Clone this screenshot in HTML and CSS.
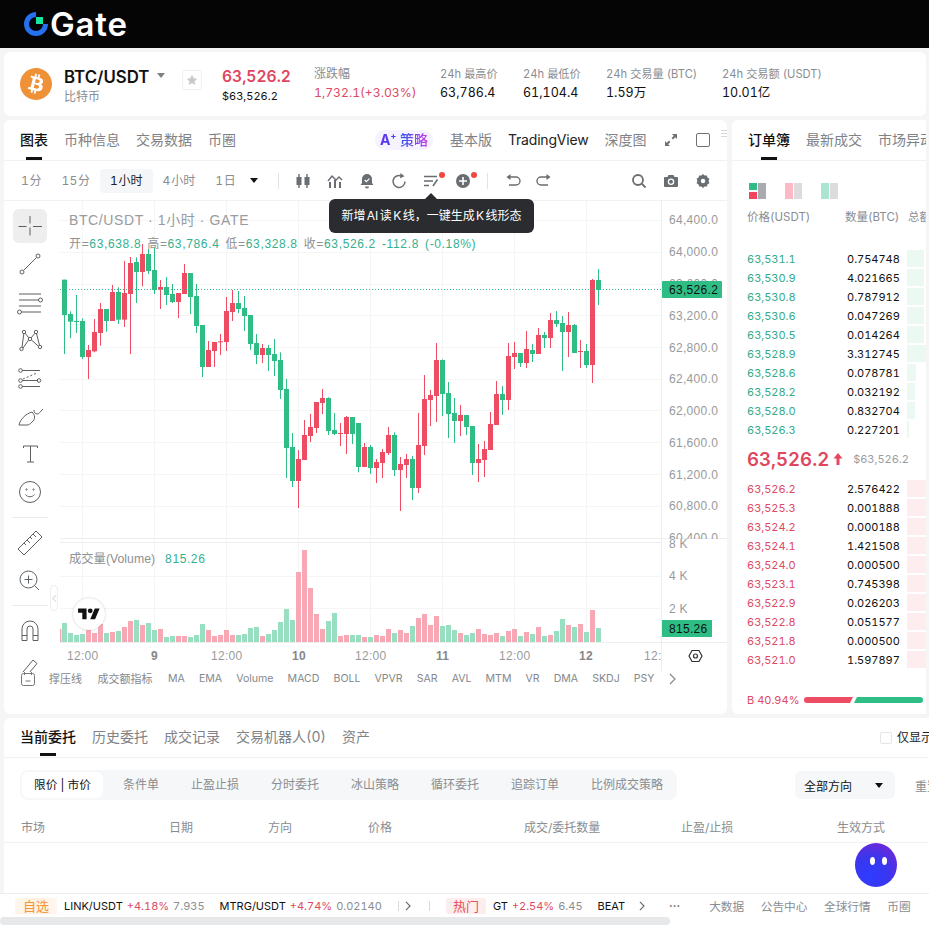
FILE: index.html
```html
<!DOCTYPE html>
<html lang="zh-CN">
<head>
    <meta charset="UTF-8">
    <meta name="viewport" content="width=device-width, initial-scale=1.0">
    <title>BTC/USDT | Gate</title>
    <link rel="stylesheet" href="styles.css">
</head>
<body>
    <header class="topbar">
        <svg class="logo-mark" viewBox="0 0 24 24" width="24" height="24">
            <path fill="#2570ee" d="M12 0A12 12 0 1 0 24 12H19A7 7 0 1 1 12 5Z"/>
            <rect fill="#17e6a1" x="12" y="5" width="7" height="7"/>
        </svg>
        <span class="logo-text">Gate</span>
    </header>

    <section class="ticker">
        <svg class="coin" viewBox="0 0 24 24" width="32" height="32">
            <circle cx="12" cy="12" r="10" fill="#fff"/>
            <path fill="#ef9136" d="M23.638 14.904c-1.602 6.43-8.113 10.34-14.542 8.736C2.67 22.05-1.244 15.525.362 9.105 1.962 2.67 8.475-1.243 14.9.358c6.43 1.605 10.342 8.115 8.738 14.548v-.002zm-6.35-4.613c.24-1.59-.974-2.45-2.64-3.03l.54-2.153-1.315-.33-.525 2.107c-.345-.087-.705-.167-1.064-.25l.526-2.127-1.32-.33-.54 2.165c-.285-.067-.565-.132-.84-.2l-1.815-.45-.35 1.407s.975.225.955.236c.535.136.63.486.615.766l-1.477 5.92c-.075.166-.24.406-.614.314.015.02-.96-.24-.96-.24l-.66 1.51 1.71.426.93.242-.54 2.19 1.32.327.54-2.17c.36.1.705.19 1.05.273l-.51 2.154 1.32.33.545-2.19c2.24.427 3.93.257 4.64-1.774.57-1.637-.03-2.58-1.217-3.196.854-.193 1.5-.76 1.68-1.93h.01zm-3.01 4.22c-.404 1.64-3.157.75-4.05.53l.72-2.9c.896.23 3.757.67 3.33 2.37zm.41-4.24c-.37 1.49-2.662.735-3.405.55l.654-2.64c.744.18 3.137.524 2.75 2.084v.006z"/>
        </svg>
        <div class="pair">
            <div class="pair-name">BTC/USDT<i class="caret caret-gray"></i></div>
            <div class="pair-sub">比特币</div>
        </div>
        <div class="star-box">
            <svg viewBox="0 0 12 12" width="12" height="12"><path fill="#c8cacc" d="M6 .8l1.6 3.4 3.7.5-2.7 2.5.7 3.7L6 9.1l-3.3 1.8.7-3.7L.7 4.7l3.7-.5z"/></svg>
        </div>
        <div class="last">
            <div class="last-price">63,526.2</div>
            <div class="last-usd">$63,526.2</div>
        </div>
        <div class="stat stat-change">
            <div class="stat-label stat-label-cn">涨跌幅</div>
            <div class="stat-value up">1,732.1(+3.03%)</div>
        </div>
        <div class="stat stat-high">
            <div class="stat-label">24h 最高价</div>
            <div class="stat-value">63,786.4</div>
        </div>
        <div class="stat stat-low">
            <div class="stat-label">24h 最低价</div>
            <div class="stat-value">61,104.4</div>
        </div>
        <div class="stat stat-vol">
            <div class="stat-label">24h 交易量 (BTC)</div>
            <div class="stat-value">1.59万</div>
        </div>
        <div class="stat">
            <div class="stat-label">24h 交易额 (USDT)</div>
            <div class="stat-value">10.01亿</div>
        </div>
    </section>

    <div class="trade-row">
        <section class="chart-card">
            <div class="tabs">
                <span class="tab active">图表</span>
                <span class="tab">币种信息</span>
                <span class="tab">交易数据</span>
                <span class="tab">币圈</span>
                <span class="ai-pill"><span class="ai-text"><b>A<sup>+</sup></b> 策略</span></span>
                <span class="tab tab-basic">基本版</span>
                <span class="tab tab-dark">TradingView</span>
                <span class="tab">深度图</span>
                <svg class="tab-icon tab-expand" viewBox="0 0 14 14" width="14" height="14"><path fill="#6f7276" d="M8 1h5v5l-1.8-1.8-2.2 2.2-1.4-1.4 2.2-2.2zM6 13H1V8l1.8 1.8L5 7.6 6.4 9l-2.2 2.2z"/></svg>
                <span class="tab-square"></span>
                <span class="tab-grip"></span>
            </div>

            <div class="toolbar">
                <span class="interval">1 分</span>
                <span class="interval">15 分</span>
                <span class="interval active">1 小时</span>
                <span class="interval">4 小时</span>
                <span class="interval">1 日</span>
                <i class="caret caret-dark"></i>
                <span class="tool-sep"></span>
                <svg class="tool" viewBox="0 0 16 16"><path fill="#6a6d71" d="M3.3 1h1.4v3H6.5v8H4.7v3H3.3v-3H1.5V4h1.8zM11.3 1h1.4v3h1.8v8h-1.8v3h-1.4v-3H9.5V4h1.8z"/></svg>
                <svg class="tool" viewBox="0 0 16 16"><path fill="#6a6d71" d="M2 9h2v6H2zM7 7h2v8H7zM12 9h2v6h-2z"/><path fill="none" stroke="#6a6d71" stroke-width="1.4" d="M1 8l4-5 4 4 3-3 3 3"/></svg>
                <svg class="tool" viewBox="0 0 16 16"><path fill="#6a6d71" d="M8 1a5 5 0 0 1 5 5v4l1.5 2h-13L3 10V6a5 5 0 0 1 5-5zM6 13.5h4a2 2 0 0 1-4 0z"/><path fill="none" stroke="#fff" stroke-width="1.2" d="M5.7 7l1.7 1.7 3-3"/></svg>
                <svg class="tool" viewBox="0 0 16 16"><path fill="none" stroke="#6a6d71" stroke-width="1.5" d="M14 8.5A6 6 0 1 1 10.5 3"/><path fill="#6a6d71" d="M9.5 0l4 3.2-4.5 2z"/></svg>
                <span class="tool-dotted">
                    <svg class="tool" viewBox="0 0 16 16"><path fill="none" stroke="#6a6d71" stroke-width="1.4" d="M1 3.5h13M1 8h9M1 12.5h5"/><path fill="none" stroke="#6a6d71" stroke-width="1.6" d="M14.5 6.5L10 13"/></svg>
                </span>
                <span class="tool-dotted">
                    <svg class="tool" viewBox="0 0 16 16"><circle cx="8" cy="8" r="7" fill="#6a6d71"/><path stroke="#fff" stroke-width="1.6" d="M8 4v8M4 8h8"/></svg>
                </span>
                <span class="tool-sep tool-sep-b"></span>
                <svg class="tool tool-undo" viewBox="0 0 16 16"><path fill="none" stroke="#6a6d71" stroke-width="1.4" d="M3 4h8a3.5 3.5 0 0 1 0 8H4"/><path fill="#6a6d71" d="M5.5 1v6L1.5 4z"/></svg>
                <svg class="tool" viewBox="0 0 16 16"><path fill="none" stroke="#6a6d71" stroke-width="1.4" d="M13 4H5a3.5 3.5 0 0 0 0 8h7"/><path fill="#6a6d71" d="M10.5 1v6l4-3z"/></svg>
                <svg class="tool tool-search" viewBox="0 0 16 16"><circle cx="7" cy="7" r="5" fill="none" stroke="#6a6d71" stroke-width="1.8"/><path stroke="#6a6d71" stroke-width="1.8" d="M10.7 10.7L14.5 14.5"/></svg>
                <svg class="tool" viewBox="0 0 16 16"><path fill="#6a6d71" d="M5.5 2h5l1 2H14a1 1 0 0 1 1 1v8a1 1 0 0 1-1 1H2a1 1 0 0 1-1-1V5a1 1 0 0 1 1-1h2.5z"/><circle cx="8" cy="8.8" r="2.6" fill="none" stroke="#fff" stroke-width="1.3"/></svg>
                <svg class="tool" viewBox="0 0 16 16"><path fill="#6a6d71" d="M8 1l1.600 1.600 2.300-.2.500 2.200 2 1.200-.8 2.200.8 2.200-2 1.200-.5 2.200-2.300-.2L8 15l-1.600-1.600-2.300.2-.5-2.200-2-1.200.8-2.200-.8-2.200 2-1.200.5-2.200 2.300.2z"/><circle cx="8" cy="8" r="2.200" fill="#fff"/></svg>
                <div class="hint">新增 AI 读 K 线，一键生成 K 线形态</div>
            </div>

            <div class="chart-body">
                <nav class="rail">
                    <button class="rail-btn active">
                        <svg viewBox="0 0 28 28" class="rail-icon"><path d="M14 4v7.5M14 15.500v8M2.500 14.500h8M17 14.500h9"/></svg>
                    </button>
                    <button class="rail-btn">
                        <svg viewBox="0 0 28 28" class="rail-icon"><circle cx="6" cy="22" r="2"/><circle cx="22" cy="6" r="2"/><path d="M7.500 20.500L20.500 7.500"/></svg>
                    </button>
                    <button class="rail-btn">
                        <svg viewBox="0 0 28 28" class="rail-icon"><path d="M3 6h22M3 12h20M3 18h22M5.500 24H25"/><circle cx="24.500" cy="12" r="2"/><circle cx="3.500" cy="24" r="2"/></svg>
                    </button>
                    <button class="rail-btn">
                        <svg viewBox="0 0 28 28" class="rail-icon"><circle cx="5.500" cy="23" r="1.700"/><circle cx="8" cy="6" r="1.700"/><circle cx="14" cy="13" r="1.700"/><circle cx="20" cy="6" r="1.700"/><circle cx="24" cy="21" r="1.700"/><path d="M6 21.500L7.800 7.700M9.200 7.300L12.800 11.800M15.200 11.800L18.800 7.300M20.500 7.700L23.500 19.300M7 22L12.500 14.200M15.500 14L22.500 20.300"/></svg>
                    </button>
                    <button class="rail-btn">
                        <svg viewBox="0 0 28 28" class="rail-icon"><path d="M6 6.500h18M6 16.500h16M6 22.500h18"/><path stroke-dasharray="2 2" d="M7 15L21 9"/><circle cx="4.500" cy="6.500" r="1.800"/><circle cx="4.500" cy="16.500" r="1.800"/><circle cx="23" cy="16.500" r="1.800"/><circle cx="4.500" cy="22.500" r="1.800"/></svg>
                    </button>
                    <button class="rail-btn">
                        <svg viewBox="0 0 28 28" class="rail-icon"><path d="M3 23C4 18 9 12 16 10C19 13 20 17 16 20C14 22 13 23 11 23H3Z"/><path d="M18 8c0 2 1 4 3 4s3-2 6-5"/></svg>
                    </button>
                    <button class="rail-btn">
                        <svg viewBox="0 0 28 28" class="rail-icon"><path d="M7.500 8V6h14v2M14.500 6v16M11 22h7"/></svg>
                    </button>
                    <button class="rail-btn">
                        <svg viewBox="0 0 28 28" class="rail-icon"><circle cx="14" cy="14" r="10.500"/><circle cx="10.500" cy="11.500" r=".6"/><circle cx="17.500" cy="11.500" r=".6"/><path d="M9.500 16.500c2 3 7 3 9 0"/></svg>
                    </button>
                    <div class="rail-sep"></div>
                    <button class="rail-btn">
                        <svg viewBox="0 0 28 28" class="rail-icon"><path d="M2 20L20 2l6 6L8 26zM8 14l2 2M11 11l3 3M14 8l2 2M17 5l3 3"/></svg>
                    </button>
                    <button class="rail-btn">
                        <svg viewBox="0 0 28 28" class="rail-icon"><circle cx="12.500" cy="12.500" r="8.500"/><path d="M12.500 8.500v8M8.500 12.500h8M18.500 18.500L23 23"/></svg>
                    </button>
                    <div class="rail-sep rail-sep-b"></div>
                    <button class="rail-btn">
                        <svg viewBox="0 0 28 28" class="rail-icon"><path d="M6 23.500V12a8 8 0 0 1 16 0v11.500h-5V12a3 3 0 0 0-6 0v11.500zM6 18.500h5M17 18.500h5"/></svg>
                    </button>
                    <button class="rail-btn rail-btn-last">
                        <svg viewBox="0 0 28 28" class="rail-icon"><path d="M7 17L17 5l4 3.500-10 12-5 1.500z"/></svg>
                    </button>
                </nav>

                <div class="plot">
                    <svg id="chart" class="plot-svg" viewBox="60 202 667 470" width="667" height="470"></svg>
                    <div class="legend">
                        <div class="legend-title">BTC/USDT · 1小时 · GATE</div>
                        <div class="legend-ohlc">
                            <span><em>开=</em>63,638.8</span>
                            <span><em>高=</em>63,786.4</span>
                            <span><em>低=</em>63,328.8</span>
                            <span><em>收=</em>63,526.2</span>
                            <span>-112.8</span>
                            <span>(-0.18%)</span>
                        </div>
                    </div>
                    <div class="legend-vol"><em>成交量(Volume)</em><span>815.26</span></div>
                    <div class="tv-badge">
                        <svg viewBox="0 0 36 28" width="22" height="17"><path fill="#111" d="M14 22H7V11H0V4h14v18zM28 22h-8l7.500-18h8L28 22z"/><circle fill="#111" cx="20" cy="8" r="4"/></svg>
                    </div>
                    <div class="rail-toggle">
                        <svg viewBox="0 0 6 10" width="5" height="9"><path fill="none" stroke="#bbb" d="M5 1L1 5l4 4"/></svg>
                    </div>
                </div>
            </div>

            <div class="indicators">
                <svg class="ind-icon" viewBox="0 0 14 14" width="14" height="14"><rect x=".5" y="1.500" width="13" height="12" rx="2" fill="none" stroke="#777"/><path stroke="#777" d="M3.500 0v3M10.500 0v3M4.500 9h5"/></svg>
                <span class="ind-cn">撑压线</span>
                <span class="ind-cn">成交额指标</span>
                <span>MA</span>
                <span>EMA</span>
                <span>Volume</span>
                <span>MACD</span>
                <span>BOLL</span>
                <span>VPVR</span>
                <span>SAR</span>
                <span>AVL</span>
                <span>MTM</span>
                <span>VR</span>
                <span>DMA</span>
                <span>SKDJ</span>
                <span>PSY</span>
                <svg class="ind-next" viewBox="0 0 7 12" width="7" height="12"><path fill="none" stroke="#888" stroke-width="1.200" d="M1 1l5 5-5 5"/></svg>
            </div>
        </section>

        <section class="book-card">
            <div class="tabs book-tabs">
                <span class="tab active">订单簿</span>
                <span class="tab">最新成交</span>
                <span class="tab">市场异动</span>
            </div>
            <div class="book-modes">
                <span class="mode"><i class="mode-split"><b></b><b></b></i><i class="mode-side"></i></span>
                <span class="mode"><i class="mode-bid"></i><i class="mode-light"></i></span>
                <span class="mode"><i class="mode-ask"></i><i class="mode-light"></i></span>
            </div>
            <div class="book-head">
                <span class="col-price">价格(USDT)</span>
                <span class="col-amount">数量(BTC)</span>
                <span class="col-total">总额</span>
            </div>
            <div class="book-side asks">
                <div class="row"><span class="col-price">63,531.1</span><span class="col-amount">0.754748</span><span class="depth"><i style="width:17px"></i></span></div>
                <div class="row"><span class="col-price">63,530.9</span><span class="col-amount">4.021665</span><span class="depth"><i style="width:17px"></i></span></div>
                <div class="row"><span class="col-price">63,530.8</span><span class="col-amount">0.787912</span><span class="depth"><i style="width:17px"></i></span></div>
                <div class="row"><span class="col-price">63,530.6</span><span class="col-amount">0.047269</span><span class="depth"><i style="width:17px"></i></span></div>
                <div class="row"><span class="col-price">63,530.5</span><span class="col-amount">0.014264</span><span class="depth"><i style="width:17px"></i></span></div>
                <div class="row"><span class="col-price">63,528.9</span><span class="col-amount">3.312745</span><span class="depth"><i style="width:19px"></i></span></div>
                <div class="row"><span class="col-price">63,528.6</span><span class="col-amount">0.078781</span><span class="depth"><i style="width:9px"></i></span></div>
                <div class="row"><span class="col-price">63,528.2</span><span class="col-amount">0.032192</span><span class="depth"><i style="width:8px"></i></span></div>
                <div class="row"><span class="col-price">63,528.0</span><span class="col-amount">0.832704</span><span class="depth"><i style="width:8px"></i></span></div>
                <div class="row"><span class="col-price">63,526.3</span><span class="col-amount">0.227201</span><span class="depth"><i style="width:2px"></i></span></div>
            </div>
            <div class="book-mid">
                <span class="mid-price">63,526.2</span>
                <svg viewBox="0 0 10 12" width="10" height="12"><path fill="#e8455e" d="M5 0l4.500 5.500H6.500V12h-3V5.500H.5z"/></svg>
                <span class="mid-usd">$63,526.2</span>
            </div>
            <div class="book-side bids">
                <div class="row"><span class="col-price">63,526.2</span><span class="col-amount">2.576422</span><span class="depth"><i style="width:19px"></i></span></div>
                <div class="row"><span class="col-price">63,525.3</span><span class="col-amount">0.001888</span><span class="depth"><i style="width:19px"></i></span></div>
                <div class="row"><span class="col-price">63,524.2</span><span class="col-amount">0.000188</span><span class="depth"><i style="width:19px"></i></span></div>
                <div class="row"><span class="col-price">63,524.1</span><span class="col-amount">1.421508</span><span class="depth"><i style="width:19px"></i></span></div>
                <div class="row"><span class="col-price">63,524.0</span><span class="col-amount">0.000500</span><span class="depth"><i style="width:19px"></i></span></div>
                <div class="row"><span class="col-price">63,523.1</span><span class="col-amount">0.745398</span><span class="depth"><i style="width:19px"></i></span></div>
                <div class="row"><span class="col-price">63,522.9</span><span class="col-amount">0.026203</span><span class="depth"><i style="width:19px"></i></span></div>
                <div class="row"><span class="col-price">63,522.8</span><span class="col-amount">0.051577</span><span class="depth"><i style="width:19px"></i></span></div>
                <div class="row"><span class="col-price">63,521.8</span><span class="col-amount">0.000500</span><span class="depth"><i style="width:19px"></i></span></div>
                <div class="row"><span class="col-price">63,521.0</span><span class="col-amount">1.597897</span><span class="depth"><i style="width:19px"></i></span></div>
            </div>
            <div class="ratio">
                <span class="ratio-label">B 40.94%</span>
                <i class="ratio-buy"></i>
                <i class="ratio-sell"></i>
            </div>
        </section>
    </div>

    <section class="orders-card">
        <div class="tabs orders-tabs">
            <span class="tab active">当前委托</span>
            <span class="tab">历史委托</span>
            <span class="tab">成交记录</span>
            <span class="tab">交易机器人(0)</span>
            <span class="tab">资产</span>
            <label class="only-current"><i class="checkbox"></i>仅显示当前</label>
        </div>
        <div class="order-filter">
            <div class="segments">
                <span class="segment active">限价 | 市价</span>
                <span class="segment">条件单</span>
                <span class="segment">止盈止损</span>
                <span class="segment">分时委托</span>
                <span class="segment">冰山策略</span>
                <span class="segment">循环委托</span>
                <span class="segment">追踪订单</span>
                <span class="segment">比例成交策略</span>
            </div>
            <span class="filter-sep"></span>
            <div class="select">全部方向<i class="caret caret-dark"></i></div>
            <span class="reset">重置</span>
        </div>
        <div class="order-head">
            <span class="h-market">市场</span>
            <span class="h-date">日期</span>
            <span class="h-side">方向</span>
            <span class="h-price">价格</span>
            <span class="h-qty">成交/委托数量</span>
            <span class="h-tpsl">止盈/止损</span>
            <span class="h-tif">生效方式</span>
        </div>
        <div class="chat-bot"><i></i><i></i></div>
    </section>

    <footer class="statusbar">
        <span class="chip chip-fav">自选</span>
        <span class="tick"><b>LINK/USDT</b><em>+4.18%</em><span>7.935</span></span>
        <span class="tick"><b>MTRG/USDT</b><em>+4.74%</em><span>0.02140</span></span>
        <span class="bar-sep bar-sep-a"></span>
        <svg class="bar-arrow" viewBox="0 0 7 12" width="6" height="10"><path fill="none" stroke="#666" stroke-width="1.300" d="M1 1l5 5-5 5"/></svg>
        <span class="bar-sep bar-sep-b"></span>
        <span class="chip chip-hot">热门</span>
        <span class="tick tick-gt"><b>GT</b><em>+2.54%</em><span>6.45</span></span>
        <span class="tick tick-beat"><b>BEAT</b></span>
        <svg class="bar-arrow bar-arrow-b" viewBox="0 0 7 12" width="6" height="10"><path fill="none" stroke="#666" stroke-width="1.300" d="M1 1l5 5-5 5"/></svg>
        <span class="bar-more">···</span>
        <span class="bar-link bar-link-first">大数据</span>
        <span class="bar-link">公告中心</span>
        <span class="bar-link">全球行情</span>
        <span class="bar-link">币圈</span>
    </footer>
    <div class="scrollbar"><i></i></div>

    <script src="chart.js"></script>
</body>
</html>
```

FILE: styles.css
```css
* {
    box-sizing: border-box;
}

html, body {
    margin: 0;
    height: 925px;
    overflow: hidden;
}

body {
    width: 929px;
    position: relative;
    background: #f5f5f5;
    color: #111;
    font-family: Inter, "Noto Sans CJK SC", sans-serif;
    font-size: 12px;
    font-variant-numeric: tabular-nums;
}

em, i {
    font-style: normal;
}

.topbar {
    height: 48px;
    background: #050505;
    display: flex;
    align-items: center;
    padding-left: 24px;
}

.logo-text {
    margin-left: 2px;
    color: #fff;
    font-size: 33px;
    font-weight: 600;
    line-height: 48px;
    letter-spacing: 0.8px;
}

/* ticker */
.ticker {
    margin: 4px 3px 0 4px;
    height: 64px;
    background: #fff;
    border-radius: 6px;
    display: flex;
    align-items: center;
    padding-left: 16px;
}

.coin {
    margin-right: 12px;
    flex: none;
}

.pair {
    width: 102px;
    margin-top: 4px;
}

.pair-name {
    font-size: 16.800px;
    font-weight: 600;
    line-height: 20px;
    display: flex;
    align-items: center;
}

.pair-sub {
    color: #8a8d91;
    line-height: 18px;
    margin-top: 1px;
}

.caret {
    display: inline-block;
    width: 0;
    height: 0;
    border-left: 4px solid transparent;
    border-right: 4px solid transparent;
    border-top: 5px solid #111;
}

.caret-gray {
    border-top-color: #7d8084;
    margin-left: 8px;
    margin-top: -3px;
}

.star-box {
    margin-left: 16px;
    width: 20px;
    height: 20px;
    border: 1px solid #f0f0f0;
    border-radius: 3px;
    display: flex;
    align-items: center;
    justify-content: center;
    margin-top: -8px;
}

.last {
    margin-left: 20px;
    width: 92px;
    margin-top: 2px;
}

.last-price {
    color: #e0475f;
    font-size: 15.600px;
    font-weight: 600;
    line-height: 22px;
}

.last-usd {
    line-height: 16px;
    font-size: 11px;
}

.stat {
    margin-top: -1px;
}

.stat-label {
    color: #8a8d91;
    font-size: 11.200px;
    line-height: 16px;
    white-space: nowrap;
}

.stat-label-cn {
    font-size: 12px;
}

.stat-value {
    font-size: 12.500px;
    line-height: 18px;
    margin-top: 2px;
}

.stat-value.up {
    color: #dd4a63;
    font-size: 12.200px;
}

.stat-change { width: 126px; }
.stat-high { width: 83px; }
.stat-low { width: 83px; }
.stat-vol { width: 116px; }

/* shared tabs */
.tabs {
    height: 41px;
    border-bottom: 1px solid #f0f1f2;
    display: flex;
    align-items: center;
    padding-left: 16px;
    gap: 16px;
    font-size: 14px;
    position: relative;
}

.tab {
    color: #7f8286;
    line-height: 20px;
    white-space: nowrap;
}

.tab.active {
    color: #111;
    font-weight: 500;
    position: relative;
}

.tab.active::after {
    content: "";
    position: absolute;
    left: 50%;
    bottom: -10px;
    width: 16px;
    height: 3px;
    margin-left: -8px;
    background: #111;
}

.tab-dark {
    color: #222;
    letter-spacing: -0.2px;
}

.ai-pill {
    margin-left: 123px;
    margin-right: 1px;
    height: 20px;
    width: 58px;
    border-radius: 10px;
    background: #f6f2ff;
    text-align: center;
    line-height: 20px;
    font-weight: 500;
    white-space: nowrap;
}

.ai-text {
    background-image: linear-gradient(90deg, #6a2cf0, #2f55ee 45%, #c83ce6);
    -webkit-background-clip: text;
    background-clip: text;
    color: transparent;
}

.ai-pill b {
    font-weight: 700;
}

.ai-pill sup {
    font-size: 9px;
    line-height: 0;
}

.tab-expand {
    margin-left: 2px;
    flex: none;
}

.tab-square {
    width: 14px;
    height: 14px;
    border: 1.500px solid #6f7276;
    border-radius: 2px;
    margin-left: 2px;
}

.tab-grip {
    position: absolute;
    right: 0;
    top: 10px;
    width: 6px;
    height: 9px;
    background: repeating-linear-gradient(#d8d8d8 0 1px, #fff 1px 3px);
}

/* trade row */
.trade-row {
    display: flex;
    margin: 4px 3px 0 4px;
    gap: 5px;
    height: 594px;
}

.chart-card {
    width: 723px;
    background: #fff;
    border-radius: 6px;
    display: flex;
    flex-direction: column;
}

.toolbar {
    height: 40px;
    border-bottom: 1px solid #f0f1f2;
    display: flex;
    align-items: center;
    padding-left: 7px;
    position: relative;
    flex: none;
}

.interval {
    color: #8a8d91;
    line-height: 24px;
    padding: 0 10px;
    border-radius: 4px;
    white-space: nowrap;
    word-spacing: -2.400px;
}

.interval.active {
    color: #222;
    background: #f5f6f7;
}

.toolbar .caret-dark {
    margin-left: 4px;
    flex: none;
}

.tool-sep {
    width: 1px;
    height: 16px;
    background: #e2e3e5;
    margin: 0 16px 0 20px;
    flex: none;
}

.tool-sep-b {
    margin: 0 17px 0 0;
}

.tool {
    width: 16px;
    height: 16px;
    margin-right: 16px;
    flex: none;
}

.tool-undo {
    margin-right: 15px;
}

.tool-search {
    margin-left: 63px;
}

.tool-dotted {
    position: relative;
    display: flex;
}

.tool-dotted::after {
    content: "";
    position: absolute;
    right: 10px;
    top: -1px;
    width: 6px;
    height: 6px;
    border-radius: 50%;
    background: #f0483e;
}

.hint {
    position: absolute;
    left: 325px;
    top: 38px;
    width: 205px;
    height: 34px;
    line-height: 34px;
    text-align: center;
    background: #2a2c30;
    color: #fff;
    border-radius: 6px;
    z-index: 5;
    white-space: nowrap;
    word-spacing: -1.800px;
}

.hint::before {
    content: "";
    position: absolute;
    left: 96px;
    top: -6px;
    border-left: 6px solid transparent;
    border-right: 6px solid transparent;
    border-bottom: 6px solid #2a2c30;
}

.chart-body {
    height: 471px;
    display: flex;
    flex: none;
}

.rail {
    width: 56px;
    padding: 6px 4px 0 0;
    height: 471px;
    overflow: hidden;
    flex: none;
    border-right: 0;
}

.rail-btn {
    display: flex;
    align-items: center;
    justify-content: center;
    width: 52px;
    height: 38px;
    padding: 0;
    border: 0;
    background: none;
    position: relative;
}

.rail-btn.active::before {
    content: "";
    position: absolute;
    left: 9px;
    top: 2px;
    width: 34px;
    height: 34px;
    border-radius: 6px;
    background: #eeeeee;
}

.rail-icon {
    width: 28px;
    height: 28px;
    fill: none;
    stroke: #5c5f63;
    stroke-width: 1;
    position: relative;
}

.rail-sep {
    height: 1px;
    width: 36px;
    margin: 6px 0 6px 8px;
    background: #e8e9ea;
}

.rail-sep-b {
    margin-top: 5px;
}

.plot {
    position: relative;
    width: 667px;
    height: 471px;
}

.plot-svg {
    display: block;
}

.plot-svg text {
    font-family: "Liberation Sans", sans-serif;
    font-size: 12px;
    fill: #98999c;
    letter-spacing: 0.3px;
}

.plot-svg .tick-day {
    font-weight: 700;
    fill: #85878a;
}

.plot-svg .tag-text {
    fill: #111;
}

.legend {
    position: absolute;
    left: 9px;
    top: 10px;
    color: #34b08e;
    font-family: "Liberation Sans", "Noto Sans CJK SC", sans-serif;
}

.legend em {
    color: #8f9194;
}

.legend-title {
    color: #999b9e;
    font-size: 14px;
    line-height: 18px;
    letter-spacing: 0.6px;
}

.legend-ohlc {
    margin-top: 6px;
    line-height: 18px;
    letter-spacing: 0.65px;
    display: flex;
    gap: 6px;
    white-space: nowrap;
}

.legend-vol {
    position: absolute;
    left: 9px;
    top: 349px;
    line-height: 18px;
    font-family: "Liberation Sans", "Noto Sans CJK SC", sans-serif;
    color: #34b08e;
    letter-spacing: 0.6px;
    white-space: nowrap;
}

.legend-vol em {
    color: #8f9194;
    margin-right: 10px;
    letter-spacing: 0;
    font-size: 12.300px;
}

.tv-badge {
    position: absolute;
    left: 13px;
    top: 397px;
    width: 32px;
    height: 32px;
    border-radius: 50%;
    background: #fff;
    box-shadow: 0 0 2px rgba(0, 0, 0, 0.25);
    display: flex;
    align-items: center;
    justify-content: center;
}

.rail-toggle {
    position: absolute;
    left: -10px;
    top: 384px;
    width: 8px;
    height: 26px;
    background: #fff;
    border: 1px solid #efefef;
    border-radius: 4px;
    display: flex;
    align-items: center;
    justify-content: center;
}

.indicators {
    display: flex;
    gap: 14px;
    padding-left: 17px;
    font-size: 10.600px;
    line-height: 14px;
    color: #85888c;
    height: 42px;
    white-space: nowrap;
}

.ind-cn {
    font-size: 11px;
    margin-right: 1.500px;
}

.ind-icon, .ind-next {
    flex: none;
}

.ind-next {
    margin-top: 1px;
}

/* order book */
.book-card {
    width: 194px;
    background: #fff;
    border-radius: 6px 0 0 6px;
    overflow: hidden;
}

.book-modes {
    display: flex;
    gap: 19px;
    padding: 22px 0 0 17px;
    height: 38px;
}

.mode {
    display: flex;
    gap: 1px;
    height: 16px;
}

.mode i {
    width: 8px;
    height: 16px;
    display: block;
}

.mode-split {
    display: flex !important;
    flex-direction: column;
    justify-content: space-between;
}

.mode-split b {
    display: block;
    height: 7px;
    background: #2ebd85;
}

.mode-split b:last-child {
    background: #f0455f;
}

.mode-side { background: #a9abae; }
.mode-bid { background: #ffb8c6; }
.mode-ask { background: #a9e5d0; }
.mode-light { background: #dcdcdc; }

.book-head {
    display: flex;
    color: #8a8d91;
    padding: 9px 0 0 15px;
    height: 50px;
    white-space: nowrap;
    font-size: 11.500px;
}

.col-price { width: 100px; flex: none; }
.col-amount { width: 52px; flex: none; text-align: right; }
.col-total { margin-left: 9px; }

.book-head .col-amount {
    text-align: left;
    margin-left: -2px;
    width: 54px;
}

.row {
    display: flex;
    align-items: center;
    height: 19px;
    padding-left: 15px;
    font-size: 11px;
}

.asks .col-price { color: #34ab89; }
.bids .col-price { color: #dd4a63; }

.depth {
    margin-left: 8px;
    width: 19px;
    height: 17px;
    display: block;
}

.depth i {
    display: block;
    height: 17px;
}

.asks .depth i { background: #ecf9f3; }
.bids .depth i { background: #fdedee; }

.book-mid {
    display: flex;
    align-items: center;
    height: 40px;
    padding-left: 15px;
}

.mid-price {
    color: #e0475f;
    font-size: 18.600px;
    font-weight: 600;
    margin-right: 4px;
}

.mid-usd {
    color: #9a9c9f;
    margin-left: 10px;
    font-size: 11px;
}

.ratio {
    display: flex;
    align-items: center;
    margin-top: 19px;
    padding-left: 15px;
    height: 24px;
}

.ratio-label {
    color: #dd4a63;
    font-size: 11px;
    width: 57px;
    white-space: nowrap;
}

.ratio-buy, .ratio-sell {
    height: 6px;
    display: block;
}

.ratio-buy {
    width: 49px;
    background: #ee4c63;
    border-radius: 3px 0 0 3px;
    clip-path: polygon(0 0, 100% 0, calc(100% - 3px) 100%, 0 100%);
}

.ratio-sell {
    width: 69px;
    margin-left: 1px;
    background: #2ebd85;
    border-radius: 0 3px 3px 0;
    clip-path: polygon(3px 0, 100% 0, 100% 100%, 0 100%);
}

/* bottom orders */
.orders-card {
    margin: 4px 0 0 4px;
    height: 175px;
    background: #fff;
    border-radius: 6px 0 0 0;
    position: relative;
}

.orders-tabs {
    height: 40px;
    padding-bottom: 2px;
}

.orders-tabs .tab.active::after {
    bottom: -9px;
}

.only-current {
    position: absolute;
    left: 876px;
    top: 13px;
    width: 60px;
    overflow: hidden;
    white-space: nowrap;
    display: flex;
    align-items: center;
    font-size: 12px;
    color: #222;
    line-height: 14px;
}

.checkbox {
    width: 12px;
    height: 12px;
    border: 1px solid #e5e5e5;
    border-radius: 2px;
    margin-right: 5px;
    flex: none;
}

.order-filter {
    display: flex;
    align-items: center;
    padding: 12px 0 0 16px;
    height: 42px;
}

.segments {
    display: flex;
    height: 30px;
    width: 657px;
    align-items: center;
    padding-left: 2px;
    background: #f5f7f8;
    border-radius: 8px;
    color: #8a8d91;
    flex: none;
}

.segment {
    padding: 0 16px;
    line-height: 26px;
    white-space: nowrap;
    flex: none;
}

.segment.active {
    width: 81px;
    padding: 0;
    text-align: center;
    margin-right: 4px;
    background: #fff;
    border-radius: 6px;
    color: #111;
    font-size: 11.700px;
}

.filter-sep {
    width: 1px;
    height: 16px;
    margin: 0 16px 0 102px;
    background: #e8e9ea;
}

.select {
    width: 100px;
    height: 28px;
    padding: 0 12px 0 9px;
    background: #f5f7f8;
    border-radius: 6px;
    display: flex;
    align-items: center;
    justify-content: space-between;
    flex: none;
}

.reset {
    margin-left: 20px;
    color: #8a8d91;
    white-space: nowrap;
}

.order-head {
    display: flex;
    margin-top: 10px;
    height: 33px;
    border-bottom: 1px solid #f0f1f2;
    color: #8a8d91;
    line-height: 36px;
    padding-left: 17px;
    white-space: nowrap;
}

.h-market { width: 148px; }
.h-date { width: 99px; }
.h-side { width: 100px; }
.h-price { width: 156px; }
.h-qty { width: 157px; }
.h-tpsl { width: 156px; }

.chat-bot {
    position: absolute;
    left: 851px;
    top: 125px;
    width: 42px;
    height: 44px;
    border-radius: 50%;
    background: radial-gradient(circle at 35% 75%, #2f3cff 0, #3a36ee 45%, #6a2ad8 80%, #a034d0 100%);
    display: flex;
    justify-content: center;
    gap: 7px;
    padding-top: 14px;
    padding-left: 4px;
    z-index: 3;
}

.chat-bot i {
    width: 5px;
    height: 8px;
    border-radius: 50%;
    background: #fff;
}

/* status bar */
.statusbar {
    height: 24px;
    background: #fff;
    border-top: 1px solid #eceded;
    display: flex;
    align-items: center;
    padding-left: 15px;
    white-space: nowrap;
    position: relative;
    z-index: 2;
}

.chip {
    height: 16px;
    line-height: 16px;
    font-size: 13px;
    text-align: center;
    flex: none;
}

.chip-fav {
    width: 42px;
    color: #f5963c;
    background: linear-gradient(90deg, #fff6ec, #fff0df 50%, #fff8f0);
}

.chip-hot {
    width: 40px;
    color: #e8505b;
    background: #fdeeee;
    border-radius: 2px;
}

.tick {
    display: flex;
    align-items: baseline;
    gap: 4px;
    font-size: 11px;
    margin-left: 7px;
    margin-right: 8px;
}

.tick span {
    color: #8a8d91;
}

.tick b {
    font-weight: 400;
    color: #111;
}

.tick em {
    color: #dd4a63;
}

.bar-sep {
    width: 1px;
    height: 10px;
    background: #d8d9da;
    flex: none;
}

.bar-sep-a {
    margin-left: 8px;
}

.bar-arrow {
    margin-left: 6px;
    flex: none;
}

.bar-sep-b {
    margin: 0 16px 0 18px;
}

.bar-more {
    margin-left: 24px;
    color: #666;
    font-weight: 700;
    font-size: 11px;
}

.bar-link {
    color: #8a8d91;
    margin-left: 16.500px;
    font-size: 11.700px;
}

.bar-link-first {
    margin-left: 29px;
}

.scrollbar {
    height: 8px;
    background: #fff;
}

.scrollbar i {
    display: block;
    width: 670px;
    height: 8px;
    background: #e6e8ea;
    border-radius: 4px;
}
```

FILE: chart.js
```js
// y values are read off at 3x, so everything gets divided by 3 when drawn
// [bodyTop, bodyBottom, wickTop, wickBottom, up?]
const candles = [
    [242,348,242,465,0],[345,368,337,417,0],[366,368,288,402,0],[366,474,358,480,0],[453,474,438,540,1],
    [399,457,360,460,1],[330,402,312,440,1],[330,366,330,398,0],[279,366,258,366,1],[279,362,265,375,0],
    [282,362,186,384,1],[192,285,174,465,1],[189,219,175,312,0],[165,219,135,262,1],[165,216,150,225,0],
    [213,273,145,285,0],[264,272,243,330,1],[264,288,234,318,0],[285,309,255,312,0],[282,309,282,357,1],
    [222,285,195,285,1],[222,294,222,345,0],[291,381,255,402,0],[378,504,378,534,0],[453,504,426,504,1],
    [429,456,429,504,1],[427,429,405,468,1],[336,429,294,456,1],[312,339,273,366,1],[312,330,276,342,0],
    [327,351,291,396,0],[348,435,348,453,0],[432,468,405,495,0],[447,468,435,492,1],[447,468,438,516,0],
    [465,486,420,531,0],[483,573,460,600,0],[570,747,540,837,0],[744,846,702,864,0],[780,846,753,927,1],
    [708,783,663,783,1],[684,711,645,729,1],[609,687,609,702,1],[597,612,570,645,1],[597,696,595,708,0],
    [693,705,642,708,0],[702,704,672,741,1],[654,705,651,765,1],[654,705,654,735,0],[672,804,672,820,0],
    [744,804,732,804,1],[744,807,738,825,0],[789,807,780,852,1],[759,792,750,837,1],[708,762,684,768,1],
    [708,813,700,831,0],[795,813,774,936,1],[780,798,765,837,1],[780,867,771,903,0],[738,867,642,882,1],
    [600,741,528,768,1],[588,603,573,681,1],[483,591,432,669,1],[483,585,481,651,0],[582,645,549,717,0],
    [642,666,597,732,0],[648,666,618,711,1],[648,684,648,708,0],[681,792,681,828,0],[780,792,735,849,1],
    [750,783,726,834,1],[675,753,639,753,1],[585,678,546,678,1],[585,603,561,648,0],[471,603,432,633,1],
    [462,474,429,510,1],[462,492,462,504,0],[450,492,396,507,1],[453,465,435,489,0],[408,465,387,465,1],
    [408,417,399,447,0],[363,417,342,447,1],[363,375,336,384,0],[372,399,351,516,0],[378,399,339,474,1],
    [378,462,375,462,0],[456,458,423,507,1],[456,498,435,507,0],[243,498,240,552,1],[243,273,210,318,0]
];

// top of each volume bar, same 3x scale, baseline is 459
const volumes = [
    402,432,438,435,420,432,405,432,429,426,414,396,393,408,402,423,420,444,441,441,441,444,438,405,423,
    441,438,423,438,438,435,417,414,441,435,423,399,360,393,249,183,297,375,420,396,372,441,438,438,438,
    444,444,438,441,420,432,423,432,411,387,375,408,381,411,408,423,432,438,432,420,435,438,432,441,426,
    420,441,429,435,414,441,438,426,390,408,414,405,429,363,417
];

const GREEN = '#2ebd85';
const RED = '#ee4c63';
const GRID = '#f5f5f6';
const svg = document.getElementById('chart');

function el(tag, attrs, text) {
    const node = document.createElementNS('http://www.w3.org/2000/svg', tag);
    for (const key in attrs) node.setAttribute(key, attrs[key]);
    if (text) node.textContent = text;
    svg.appendChild(node);
    return node;
}

function line(x1, y1, x2, y2, color) {
    el('line', { x1, y1, x2, y2, stroke: color, 'stroke-width': 1 });
}

// clips for the two panes, the 60,400 label and the 8K label get cut at the divider
const defs = el('defs', {});
defs.innerHTML =
    '<clipPath id="upper"><rect x="60" y="202" width="667" height="338"/></clipPath>' +
    '<clipPath id="lower"><rect x="60" y="540" width="667" height="132"/></clipPath>';

// grid
[82.5, 154.5, 226.5, 298.5, 370.5, 442.5, 514.5, 586.5].forEach(x => line(x, 202, x, 643, GRID));
[221.5, 253.5, 285.5, 316.5, 348.5, 380.5, 411.5, 443.5, 475.5, 507.5, 577.5, 609.5].forEach(y => line(60, y, 661, y, GRID));
line(60, 539.5, 727, 539.5, '#eeeeef');
line(60, 543.5, 661, 543.5, '#eeeeef');
line(60, 643.5, 727, 643.5, '#eeeeef');
line(661.5, 202, 661.5, 672, '#eeeeef');

// price axis
const prices = ['64,400.0', '64,000.0', '63,600.0', '63,200.0', '62,800.0', '62,400.0', '62,000.0', '61,600.0', '61,200.0', '60,800.0', '60,400.0'];
const priceY = [225, 257, 289, 321, 353, 384, 416, 448, 480, 511, 543];
prices.forEach((p, i) => {
    el('text', { x: 669, y: priceY[i], 'clip-path': 'url(#upper)' }, p);
});
el('text', { x: 669, y: 549, 'clip-path': 'url(#lower)' }, '8 K');
el('text', { x: 669, y: 581 }, '4 K');
el('text', { x: 669, y: 614 }, '2 K');

// candles
candles.forEach((c, i) => {
    const x = 64.5 + i * 6;
    const color = c[4] ? RED : GREEN;
    line(x, c[2] / 3 + 200, x, c[3] / 3 + 200, color);
    el('rect', { x: x - 2.5, y: c[0] / 3 + 200, width: 5, height: Math.max((c[1] - c[0]) / 3, 1), fill: color });
});

// volume
el('rect', { x: 60, y: 630, width: 1.5, height: 13, fill: '#f8a8b5' });
volumes.forEach((top, i) => {
    const x = 64.5 + i * 6;
    const y = top / 3 + 490;
    el('rect', { x: x - 2.5, y, width: 5, height: 643 - y, fill: candles[i][4] ? '#f8a8b5' : '#98dfc2' });
});

// last price line and tags
el('line', { x1: 60, y1: 290.5, x2: 661, y2: 290.5, stroke: '#2ebd85', 'stroke-width': 1, 'stroke-dasharray': '1 2' });
el('rect', { x: 662, y: 282, width: 60, height: 17, rx: 1, fill: GREEN });
el('text', { x: 669, y: 295, class: 'tag-text' }, '63,526.2');
el('rect', { x: 662, y: 621, width: 50, height: 17, fill: GREEN });
el('text', { x: 669, y: 634, class: 'tag-text' }, '815.26');

// time axis
const times = [[67, '12:00'], [151, '9', 1], [211, '12:00'], [292, '10', 1], [355, '12:00'], [436, '11', 1], [499, '12:00'], [579, '12', 1], [644, '12:']];
times.forEach(t => {
    el('text', { x: t[0], y: 661, class: t[2] ? 'tick-day' : '' }, t[1]);
});

// settings hexagon
el('path', { d: 'M689 657l3-5.500h7l3 5.500-3 5.500h-7z', fill: 'none', stroke: '#333', 'stroke-width': 1.2 });
el('circle', { cx: 695.5, cy: 657, r: 2, fill: 'none', stroke: '#333', 'stroke-width': 1.2 });
```
